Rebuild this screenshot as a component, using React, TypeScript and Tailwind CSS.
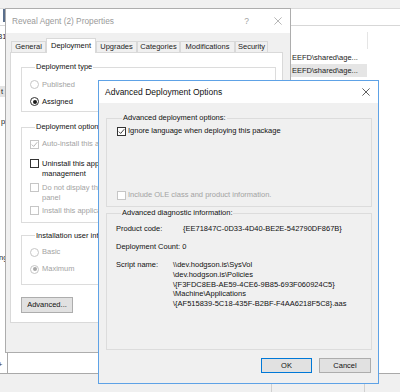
import type { ReactNode } from "react";

function Check({ muted }: { muted?: boolean }) {
  return (
    <svg viewBox="0 0 9 9" className="h-[7px] w-[7px]">
      <path
        d="M1 4.6 L3.4 7 L8 1.6"
        fill="none"
        stroke={muted ? "#a8a8a8" : "#1e1e1e"}
        strokeWidth="1.1"
      />
    </svg>
  );
}

function Checkbox({ checked, disabled }: { checked?: boolean; disabled?: boolean }) {
  return (
    <span
      className={`mt-[0.5px] flex h-[9px] w-[9px] shrink-0 items-center justify-center border bg-white ${
        disabled ? "border-[#c6c6c6]" : "border-[#333333]"
      }`}
    >
      {checked && <Check muted={disabled} />}
    </span>
  );
}

function Radio({ checked, disabled }: { checked?: boolean; disabled?: boolean }) {
  return (
    <span
      className={`flex h-[9px] w-[9px] shrink-0 items-center justify-center rounded-full border bg-white ${
        disabled ? "border-[#c6c6c6]" : "border-[#333333]"
      }`}
    >
      {checked && (
        <span
          className={`h-[4px] w-[4px] rounded-full ${disabled ? "bg-[#a8a8a8]" : "bg-[#1a1a1a]"}`}
        />
      )}
    </span>
  );
}

function CloseIcon({ color }: { color: string }) {
  return (
    <svg viewBox="0 0 10 10" className="h-[8px] w-[8px]">
      <path d="M0.5 0.5 L9.5 9.5 M9.5 0.5 L0.5 9.5" stroke={color} strokeWidth="0.9" />
    </svg>
  );
}

function Tab({ label, active, width }: { label: string; active?: boolean; width: string }) {
  if (active) {
    return (
      <div
        className={`${width} -mb-[1px] flex h-[15px] items-start justify-center border border-b-0 border-[#d9d9d9] bg-white pt-[2px] leading-[10px] text-[#111]`}
      >
        {label}
      </div>
    );
  }
  return (
    <div
      className={`${width} flex h-[11px] items-center justify-center border border-b-0 border-[#d9d9d9] bg-[#f0f0f0] leading-[10px] text-[#222]`}
    >
      {label}
    </div>
  );
}

function Group({
  label,
  className,
  children,
}: {
  label: string;
  className: string;
  children: ReactNode;
}) {
  return (
    <fieldset className={`border border-[#dcdcdc] ${className}`}>
      <legend className="ml-[5px] px-[1px] leading-[10px] text-[#111]">{label}</legend>
      {children}
    </fieldset>
  );
}

function Option({
  control,
  disabled,
  children,
  className = "",
}: {
  control: ReactNode;
  disabled?: boolean;
  children: ReactNode;
  className?: string;
}) {
  return (
    <div className={`flex items-start gap-[3px] leading-[10px] ${className}`}>
      {control}
      <span className={`whitespace-nowrap ${disabled ? "text-[#a3a3a3]" : "text-[#111]"}`}>
        {children}
      </span>
    </div>
  );
}

function RadioRow({
  label,
  checked,
  disabled,
}: {
  label: string;
  checked?: boolean;
  disabled?: boolean;
}) {
  return (
    <div className="flex h-[17px] items-center gap-[3px]">
      <Radio checked={checked} disabled={disabled} />
      <span className={disabled ? "text-[#a3a3a3]" : "text-[#111]"}>{label}</span>
    </div>
  );
}

function Background() {
  return (
    <div className="flex h-full flex-col bg-white">
      <div className="h-[9px] border-b border-[#dadada] bg-[#f0f0f0]" />
      <div className="flex h-[17px] border-b border-[#d7d7d7] bg-white">
        <div className="ml-[3px] h-[13px] w-[2px] bg-[#5a6f8c]" />
      </div>
      <div className="flex h-[325px]">
        <div className="flex w-[5px] flex-col overflow-hidden leading-[10px] text-[#222]">
          <span className="-ml-[2px] mt-[6px] whitespace-nowrap">31</span>
          <span className="mt-[44px] h-[11px] bg-[#e3e3e3] pl-[1px] leading-[11px]">t</span>
          <span className="mt-[20px] pl-[1px]">p</span>
          <span className="-ml-[1px] mt-[126px] whitespace-nowrap">ng</span>
        </div>
        <div className="flex-1" />
        <div className="flex w-[110px] flex-col text-[#222]">
          <div className="flex h-[25px] items-end pb-[2px]">
            <div className="ml-[77px] h-[17px] w-px bg-[#e5e5e5]" />
          </div>
          <div className="flex h-[13px] w-[77px] items-center pl-[2px] whitespace-nowrap">
            EEFD\shared\age...
          </div>
          <div className="flex h-[13px] w-[77px] items-center bg-[#e5e5e5] pl-[2px] whitespace-nowrap">
            EEFD\shared\age...
          </div>
        </div>
      </div>
      <div className="flex h-[23px] border-b border-[#a9a9a9] bg-white">
        <div className="flex w-[8px] items-center border-r border-[#a9a9a9] text-[#333]">
          <span className="-ml-[2px] mt-[6px]">+</span>
        </div>
        <div className="flex-1" />
      </div>
      <div className="flex flex-1 bg-[#f0f0f0]">
        <div className="w-[272px] border-r border-[#d0d0d0]" />
        <div className="w-[93px] border-r border-[#d0d0d0]" />
      </div>
    </div>
  );
}

function PropertiesDialog() {
  return (
    <div className="absolute left-[5px] top-[8px] flex h-[345px] w-[286px] flex-col border border-[#adadad] bg-[#f0f0f0]">
      <div className="flex h-[24px] items-center justify-between bg-white pl-[6px] pr-[8px]">
        <span className="text-[8.3px] text-[#9a9a9a]">Reveal Agent (2) Properties</span>
        <div className="flex items-center gap-[25px]">
          <span className="text-[8.5px] text-[#a0a0a0]">?</span>
          <CloseIcon color="#9a9a9a" />
        </div>
      </div>
      <div className="flex flex-col pl-[4px] pr-[7px] pt-[5px]">
        <div className="relative z-10 flex h-[14px] items-end pl-[1px]">
          <Tab label="General" width="w-[35px]" />
          <Tab label="Deployment" width="w-[50px]" active />
          <Tab label="Upgrades" width="w-[41px]" />
          <Tab label="Categories" width="w-[43px]" />
          <Tab label="Modifications" width="w-[55px]" />
          <Tab label="Security" width="w-[33px]" />
        </div>
        <div className="flex h-[271px] flex-col border border-[#d9d9d9] bg-white pl-[10px] pt-[9px]">
          <Group label="Deployment type" className="w-[255px] px-[8px] pb-[1px] pt-[4px]">
            <RadioRow label="Published" disabled />
            <RadioRow label="Assigned" checked />
          </Group>
          <Group label="Deployment options" className="mt-[10px] w-[255px] px-[8px] pb-[6px] pt-[7px]">
            <Option control={<Checkbox checked disabled />} disabled>
              Auto-install this application when deploying
            </Option>
            <Option control={<Checkbox />} className="mt-[9.5px]">
              Uninstall this application when it falls out of the scope of
              <br />
              management
            </Option>
            <Option control={<Checkbox disabled />} disabled className="mt-[4px]">
              Do not display this package in the Add/Remove Programs control
              <br />
              panel
            </Option>
            <Option control={<Checkbox disabled />} disabled className="mt-[3px]">
              Install this application at logon
            </Option>
          </Group>
          <Group label="Installation user interface options" className="mt-[8px] w-[255px] px-[8px] pb-[6px] pt-[3px]">
            <RadioRow label="Basic" disabled />
            <RadioRow label="Maximum" checked disabled />
          </Group>
          <button
            type="button"
            className="mt-[12px] flex h-[16px] w-[52px] items-center justify-center border border-[#adadad] bg-[#e1e1e1] leading-[10px] text-[#111]"
          >
            Advanced...
          </button>
        </div>
      </div>
    </div>
  );
}

function AdvancedDialog() {
  return (
    <div className="absolute left-[98px] top-[80px] z-20 flex h-[304px] w-[281px] flex-col border border-[#5ea2e6] bg-[#f0f0f0]">
      <div className="flex h-[22px] items-center justify-between bg-white pl-[6px] pr-[8px]">
        <span className="text-[8.5px] text-[#111]">Advanced Deployment Options</span>
        <CloseIcon color="#222" />
      </div>
      <div className="flex flex-1 flex-col pb-[10px] pl-[7px] pr-[6px] pt-[10px]">
        <Group label="Advanced deployment options:" className="px-[10px] pb-[6px] pt-[3px]">
          <div className="flex items-start gap-[2px] leading-[10px]">
            <Checkbox checked />
            <span className="text-[#111]">Ignore language when deploying this package</span>
          </div>
          <div className="mt-[54px] flex items-start gap-[2px] leading-[10px]">
            <Checkbox disabled />
            <span className="text-[#a3a3a3]">Include OLE class and product information.</span>
          </div>
        </Group>
        <Group label="Advanced diagnostic information:" className="mt-[1px] flex-1 px-[9px] pt-[6px]">
          <div className="flex leading-[10px] text-[#111]">
            <span className="w-[67px]">Product code:</span>
            <span>{"{EE71847C-0D33-4D40-BE2E-542790DF867B}"}</span>
          </div>
          <div className="mt-[8px] leading-[10px] text-[#111]">Deployment Count: 0</div>
          <div className="mt-[8px] flex leading-[9.75px] text-[#111]">
            <span className="w-[57px]">Script name:</span>
            <div className="flex flex-col whitespace-nowrap">
              <span>\\dev.hodgson.is\SysVol</span>
              <span>\dev.hodgson.is\Policies</span>
              <span>{"\\{F3FDC8EB-AE59-4CE6-9B85-693F060924C5}"}</span>
              <span>\Machine\Applications</span>
              <span>{"\\{AF515839-5C18-435F-B2BF-F4AA6218F5C8}.aas"}</span>
            </div>
          </div>
        </Group>
        <div className="mt-[8px] flex justify-end gap-[7px] pr-[1px]">
          <button
            type="button"
            className="flex h-[15px] w-[51px] items-center justify-center border border-[#0078d7] bg-[#e1e1e1] text-[#111]"
          >
            OK
          </button>
          <button
            type="button"
            className="flex h-[15px] w-[52px] items-center justify-center border border-[#adadad] bg-[#e1e1e1] text-[#111]"
          >
            Cancel
          </button>
        </div>
      </div>
    </div>
  );
}

export default function App() {
  return (
    <div className="relative h-[392px] w-[400px] overflow-hidden font-['Liberation_Sans',Arial,sans-serif] text-[7.5px]">
      <Background />
      <PropertiesDialog />
      <AdvancedDialog />
    </div>
  );
}
